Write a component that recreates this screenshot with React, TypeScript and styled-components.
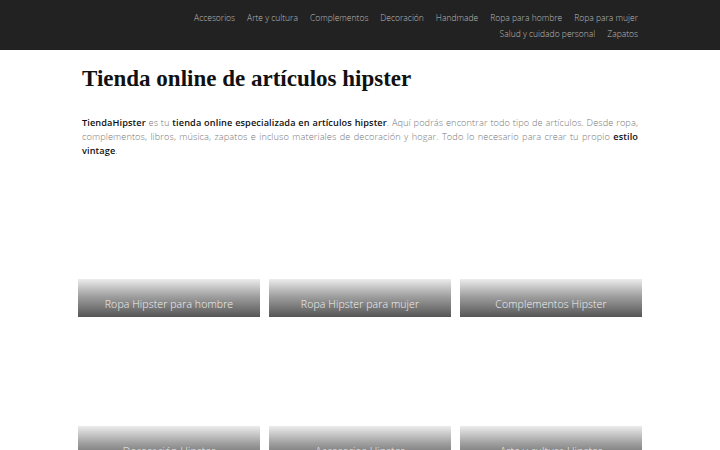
import React from "react";
import styled, { createGlobalStyle } from "styled-components";

const Global = createGlobalStyle`
  html, body { margin: 0; padding: 0; background: #fff; }
  body { font-family: "Open Sans", "Lato", sans-serif; }
`;

const Header = styled.header`
  background: #222222;
  height: 50px;
  display: flex;
  justify-content: flex-end;
  padding: 10px 82px 0 180px;
  box-sizing: border-box;
`;

const Nav = styled.nav`
  display: flex;
  flex-wrap: wrap;
  justify-content: flex-end;
  align-content: flex-start;
  column-gap: 12px;
  row-gap: 0;
  max-width: 450px;
`;

const NavLink = styled.a`
  font-family: "Open Sans", sans-serif;
  font-weight: 300;
  font-size: 8.5px;
  line-height: 16px;
  color: #bdbdbd;
  text-decoration: none;
  white-space: nowrap;
`;

const Main = styled.main`
  width: 564px;
  margin: 0 auto;
  padding-top: 14px;
`;

const Title = styled.h1`
  font-family: "Liberation Serif", serif;
  font-weight: 700;
  font-size: 23px;
  letter-spacing: 0px;
  color: #111;
  margin: 0 0 0 4px;
  line-height: 30px;
`;

const Intro = styled.p`
  margin: 22px 4px 0 4px;
  font-size: 9.2px;
  letter-spacing: 0.1px;
  line-height: 14px;
  color: #777;
  font-weight: 300;
  text-align: justify;
`;

const Strong = styled.strong`
  color: #111;
  font-weight: 600;
`;

const Grid = styled.div`
  display: grid;
  grid-template-columns: repeat(3, 182px);
  column-gap: 9px;
  row-gap: 9px;
  margin-top: 21px;
`;

const Card = styled.a`
  height: 138px;
  display: flex;
  flex-direction: column;
  justify-content: flex-end;
  text-decoration: none;
`;

const Bar = styled.div`
  height: 38px;
  background: linear-gradient(to bottom, #ececec 0%, #a0a0a0 45%, #555 100%);
  display: flex;
  align-items: flex-end;
  justify-content: center;
  padding-bottom: 6px;
  box-sizing: border-box;
  color: #f2f2f2;
  font-size: 10.5px;
  font-weight: 300;
  letter-spacing: 0.1px;
  line-height: 14px;
`;

const navItems = [
  "Accesorios",
  "Arte y cultura",
  "Complementos",
  "Decoración",
  "Handmade",
  "Ropa para hombre",
  "Ropa para mujer",
  "Salud y cuidado personal",
  "Zapatos",
];

const cards = [
  "Ropa Hipster para hombre",
  "Ropa Hipster para mujer",
  "Complementos Hipster",
  "Decoración Hipster",
  "Accesorios Hipster",
  "Arte y cultura Hipster",
];

export default function App() {
  return (
    <>
      <Global />
      <Header>
        <Nav>
          {navItems.map((n) => (
            <NavLink key={n} href="#">
              {n}
            </NavLink>
          ))}
        </Nav>
      </Header>
      <Main>
        <Title>Tienda online de artículos hipster</Title>
        <Intro>
          <Strong>TiendaHipster</Strong> es tu{" "}
          <Strong>tienda online especializada en artículos hipster</Strong>. Aquí
          podrás encontrar todo tipo de artículos. Desde ropa, complementos,
          libros, música, zapatos e incluso materiales de decoración y hogar.
          Todo lo necesario para crear tu propio <Strong>estilo vintage</Strong>.
        </Intro>
        <Grid>
          {cards.map((c) => (
            <Card key={c} href="#">
              <Bar>{c}</Bar>
            </Card>
          ))}
        </Grid>
      </Main>
    </>
  );
}
